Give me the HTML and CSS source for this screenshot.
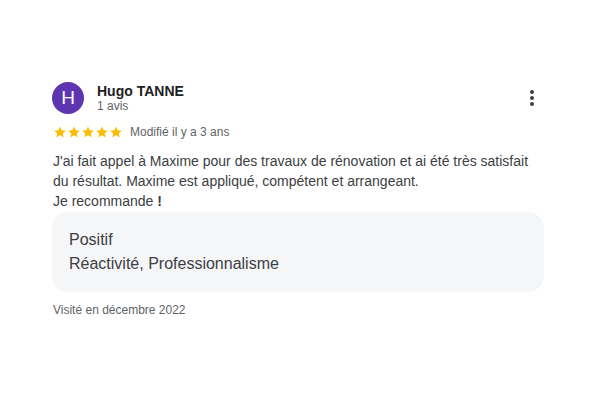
FILE: index.html
```html
<!DOCTYPE html>
<html lang="fr">
<head>
<meta charset="utf-8">
<link rel="stylesheet" href="styles.css">
</head>
<body>
<div class="review">
  <div class="header">
    <div class="avatar">H</div>
    <div class="who">
      <div class="name">Hugo TANNE</div>
      <div class="count">1 avis</div>
    </div>
    <button class="more" aria-label="Plus">
      <svg width="4" height="16" viewBox="0 0 4 16"><circle cx="2" cy="2" r="2" fill="#3c4043"/><circle cx="2" cy="8" r="2" fill="#3c4043"/><circle cx="2" cy="14" r="2" fill="#3c4043"/></svg>
    </button>
  </div>
  <div class="meta">
    <div class="stars">
      <svg width="14" height="14" viewBox="0 0 24 24"><path d="M12 2.5l2.9 6.6 7.1.6-5.4 4.7 1.6 7-6.2-3.7-6.2 3.7 1.6-7L2 9.7l7.1-.6z" fill="#fbbc04"/></svg>
      <svg width="14" height="14" viewBox="0 0 24 24"><path d="M12 2.5l2.9 6.6 7.1.6-5.4 4.7 1.6 7-6.2-3.7-6.2 3.7 1.6-7L2 9.7l7.1-.6z" fill="#fbbc04"/></svg>
      <svg width="14" height="14" viewBox="0 0 24 24"><path d="M12 2.5l2.9 6.6 7.1.6-5.4 4.7 1.6 7-6.2-3.7-6.2 3.7 1.6-7L2 9.7l7.1-.6z" fill="#fbbc04"/></svg>
      <svg width="14" height="14" viewBox="0 0 24 24"><path d="M12 2.5l2.9 6.6 7.1.6-5.4 4.7 1.6 7-6.2-3.7-6.2 3.7 1.6-7L2 9.7l7.1-.6z" fill="#fbbc04"/></svg>
      <svg width="14" height="14" viewBox="0 0 24 24"><path d="M12 2.5l2.9 6.6 7.1.6-5.4 4.7 1.6 7-6.2-3.7-6.2 3.7 1.6-7L2 9.7l7.1-.6z" fill="#fbbc04"/></svg>
    </div>
    <span class="date">Modifié il y a 3 ans</span>
  </div>
  <p class="text">J'ai fait appel à Maxime pour des travaux de rénovation et ai été très satisfait du résultat. Maxime est appliqué, compétent et arrangeant.<br>Je recommande <b>!</b></p>
  <div class="box">
    <div>Positif</div>
    <div>Réactivité, Professionnalisme</div>
  </div>
  <div class="visit">Visité en décembre 2022</div>
</div>
</body>
</html>
```
FILE: styles.css
```css
html, body {
  margin: 0;
  background: #fff;
}
body {
  font-family: "Liberation Sans", Arial, sans-serif;
  color: #202124;
}
.review {
  width: 492px;
  margin: 82px 0 0 52px;
}
.header {
  display: flex;
  align-items: flex-start;
  gap: 13px;
}
.avatar {
  width: 32px;
  height: 32px;
  border-radius: 50%;
  background: #5e35b1;
  color: #fff;
  font-size: 19px;
  line-height: 32px;
  text-align: center;
  flex: none;
}
.who {
  flex: 1;
  padding-top: 1px;
}
.name {
  font-size: 14px;
  font-weight: bold;
  line-height: 16px;
  color: #202124;
}
.count {
  font-size: 12px;
  line-height: 15px;
  color: #5f6368;
}
.more {
  border: 0;
  background: none;
  padding: 0;
  margin: 8px 10px 0 0;
  width: 4px;
  height: 16px;
  display: flex;
}
.meta {
  display: flex;
  align-items: center;
  gap: 7px;
  margin-top: 10px;
  height: 16px;
}
.stars {
  display: flex;
  gap: 0;
  margin-left: 1px;
}
.stars svg {
  display: block;
}
.date {
  font-size: 12px;
  color: #5f6368;
}
.text {
  margin: 11px 0 0 1px;
  font-size: 14px;
  line-height: 20px;
  color: #3c4043;
}
.text b {
  font-weight: bold;
}
.box {
  margin-top: 1px;
  background: #f5f6f8;
  border-radius: 16px;
  padding: 16px 16px 16px 17px;
  font-size: 16px;
  line-height: 24px;
  color: #3c4043;
}
.visit {
  margin: 10px 0 0 1px;
  font-size: 12px;
  line-height: 16px;
  color: #5f6368;
}
```
